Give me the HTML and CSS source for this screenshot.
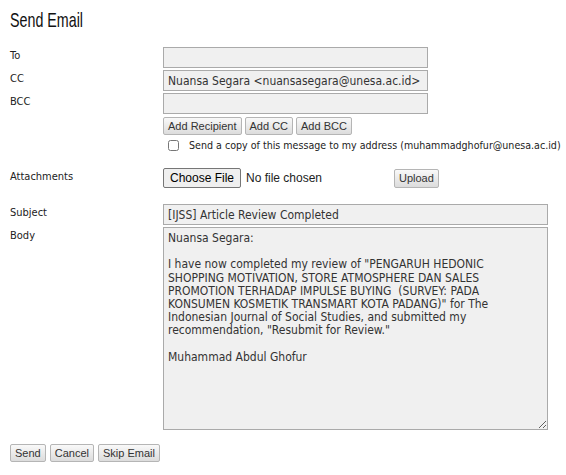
FILE: index.html
```html
<!DOCTYPE html>
<html>
<head>
<meta charset="utf-8">
<link rel="stylesheet" href="styles.css">
</head>
<body>
<h1 class="title"><span class="title-text">Send Email</span></h1>
<form class="form">
  <div class="row row-to">
    <label class="label">To</label>
    <input class="text short" type="text" value="">
  </div>
  <div class="row">
    <label class="label">CC</label>
    <input class="text short" type="text" value="Nuansa Segara &lt;nuansasegara@unesa.ac.id&gt;">
  </div>
  <div class="row">
    <label class="label">BCC</label>
    <input class="text short" type="text" value="">
  </div>
  <div class="row row-buttons">
    <span class="label"></span>
    <div class="btns">
      <button type="button" class="btn">Add Recipient</button>
      <button type="button" class="btn">Add CC</button>
      <button type="button" class="btn">Add BCC</button>
    </div>
  </div>
  <div class="row row-check">
    <span class="label"></span>
    <label class="check"><input type="checkbox" class="cb"><span>Send a copy of this message to my address (muhammadghofur@unesa.ac.id)</span></label>
  </div>
  <div class="row row-attach">
    <label class="label">Attachments</label>
    <div class="attach">
      <input type="file" class="file">
      <button type="button" class="btn upload">Upload</button>
    </div>
  </div>
  <div class="row row-subject">
    <label class="label">Subject</label>
    <input class="text long" type="text" value="[IJSS] Article Review Completed">
  </div>
  <div class="row">
    <label class="label">Body</label>
    <textarea class="text long body">Nuansa Segara:

I have now completed my review of "PENGARUH HEDONIC SHOPPING MOTIVATION, STORE ATMOSPHERE DAN SALES PROMOTION TERHADAP IMPULSE BUYING  (SURVEY: PADA KONSUMEN KOSMETIK TRANSMART KOTA PADANG)" for The Indonesian Journal of Social Studies, and submitted my recommendation, "Resubmit for Review."

Muhammad Abdul Ghofur</textarea>
  </div>
  <div class="actions">
    <button type="button" class="btn">Send</button>
    <button type="button" class="btn">Cancel</button>
    <button type="button" class="btn">Skip Email</button>
  </div>
</form>
</body>
</html>
```
FILE: styles.css
```css
html, body {
  margin: 0;
  padding: 0;
  background: #fff;
}
body {
  padding: 8px 10px;
  font-family: "DejaVu Sans", sans-serif;
  font-stretch: condensed;
  font-size: 11px;
  color: #222;
}
.title {
  margin: 0;
  font-family: "Liberation Sans", sans-serif;
  font-weight: normal;
  font-size: 21px;
  line-height: 24px;
  color: #111;
}
.title-text {
  display: inline-block;
  transform: scaleX(0.68);
  transform-origin: left center;
}
.form {
  margin-top: 15px;
}
.row {
  display: flex;
  align-items: flex-start;
  margin-top: 2px;
}
.label {
  width: 153px;
  flex: none;
  padding-top: 2px;
  line-height: 14px;
  color: #222;
}
.text {
  box-sizing: border-box;
  height: 21px;
  margin: 0;
  padding: 2px 4px;
  border: 1px solid #aaa;
  background: #f0f0f0;
  font-family: "DejaVu Sans", sans-serif;
  font-stretch: condensed;
  font-size: 12px;
  color: #333;
  outline: none;
}
.short { width: 265px; }
.long { width: 385px; }
.body {
  height: 203px;
  line-height: 13.2px;
  padding: 4px 4px;
  resize: both;
  display: block;
}
.row-buttons { margin-top: 3px; }
.btns {
  display: flex;
  gap: 3px;
}
.btn {
  box-sizing: border-box;
  height: 18px;
  margin: 0;
  padding: 0 4px;
  border: 1px solid #b5b5b5;
  border-radius: 2px;
  background: linear-gradient(#f9f9f9, #dcdcdc);
  font-family: "Liberation Sans", Arial, sans-serif;
  font-size: 11px;
  color: #333;
  line-height: 16px;
}
.row-check { margin-top: 4px; }
.check {
  display: flex;
  align-items: center;
  gap: 10px;
  color: #222;
  padding-left: 5px;
  white-space: nowrap;
  font-size: 10.6px;
}
.cb {
  width: 11px;
  height: 11px;
  margin: 0;
}
.row-attach { margin-top: 17px; }
.attach {
  display: flex;
  align-items: center;
}
.file {
  width: 231px;
  font-family: "Liberation Sans", Arial, sans-serif;
  font-size: 12px;
  color: #222;
}
.file::file-selector-button {
  box-sizing: border-box;
  height: 20px;
  width: 78px;
  margin: 0 5px 0 0;
  padding: 0;
  border: 1px solid #767676;
  border-radius: 2px;
  background: #efefef;
  font-family: "Liberation Sans", Arial, sans-serif;
  font-size: 12px;
  color: #000;
}
.upload {
  height: 19px;
}
.row-subject { margin-top: 16px; }
.actions {
  display: flex;
  gap: 4px;
  margin-top: 14px;
}
```
